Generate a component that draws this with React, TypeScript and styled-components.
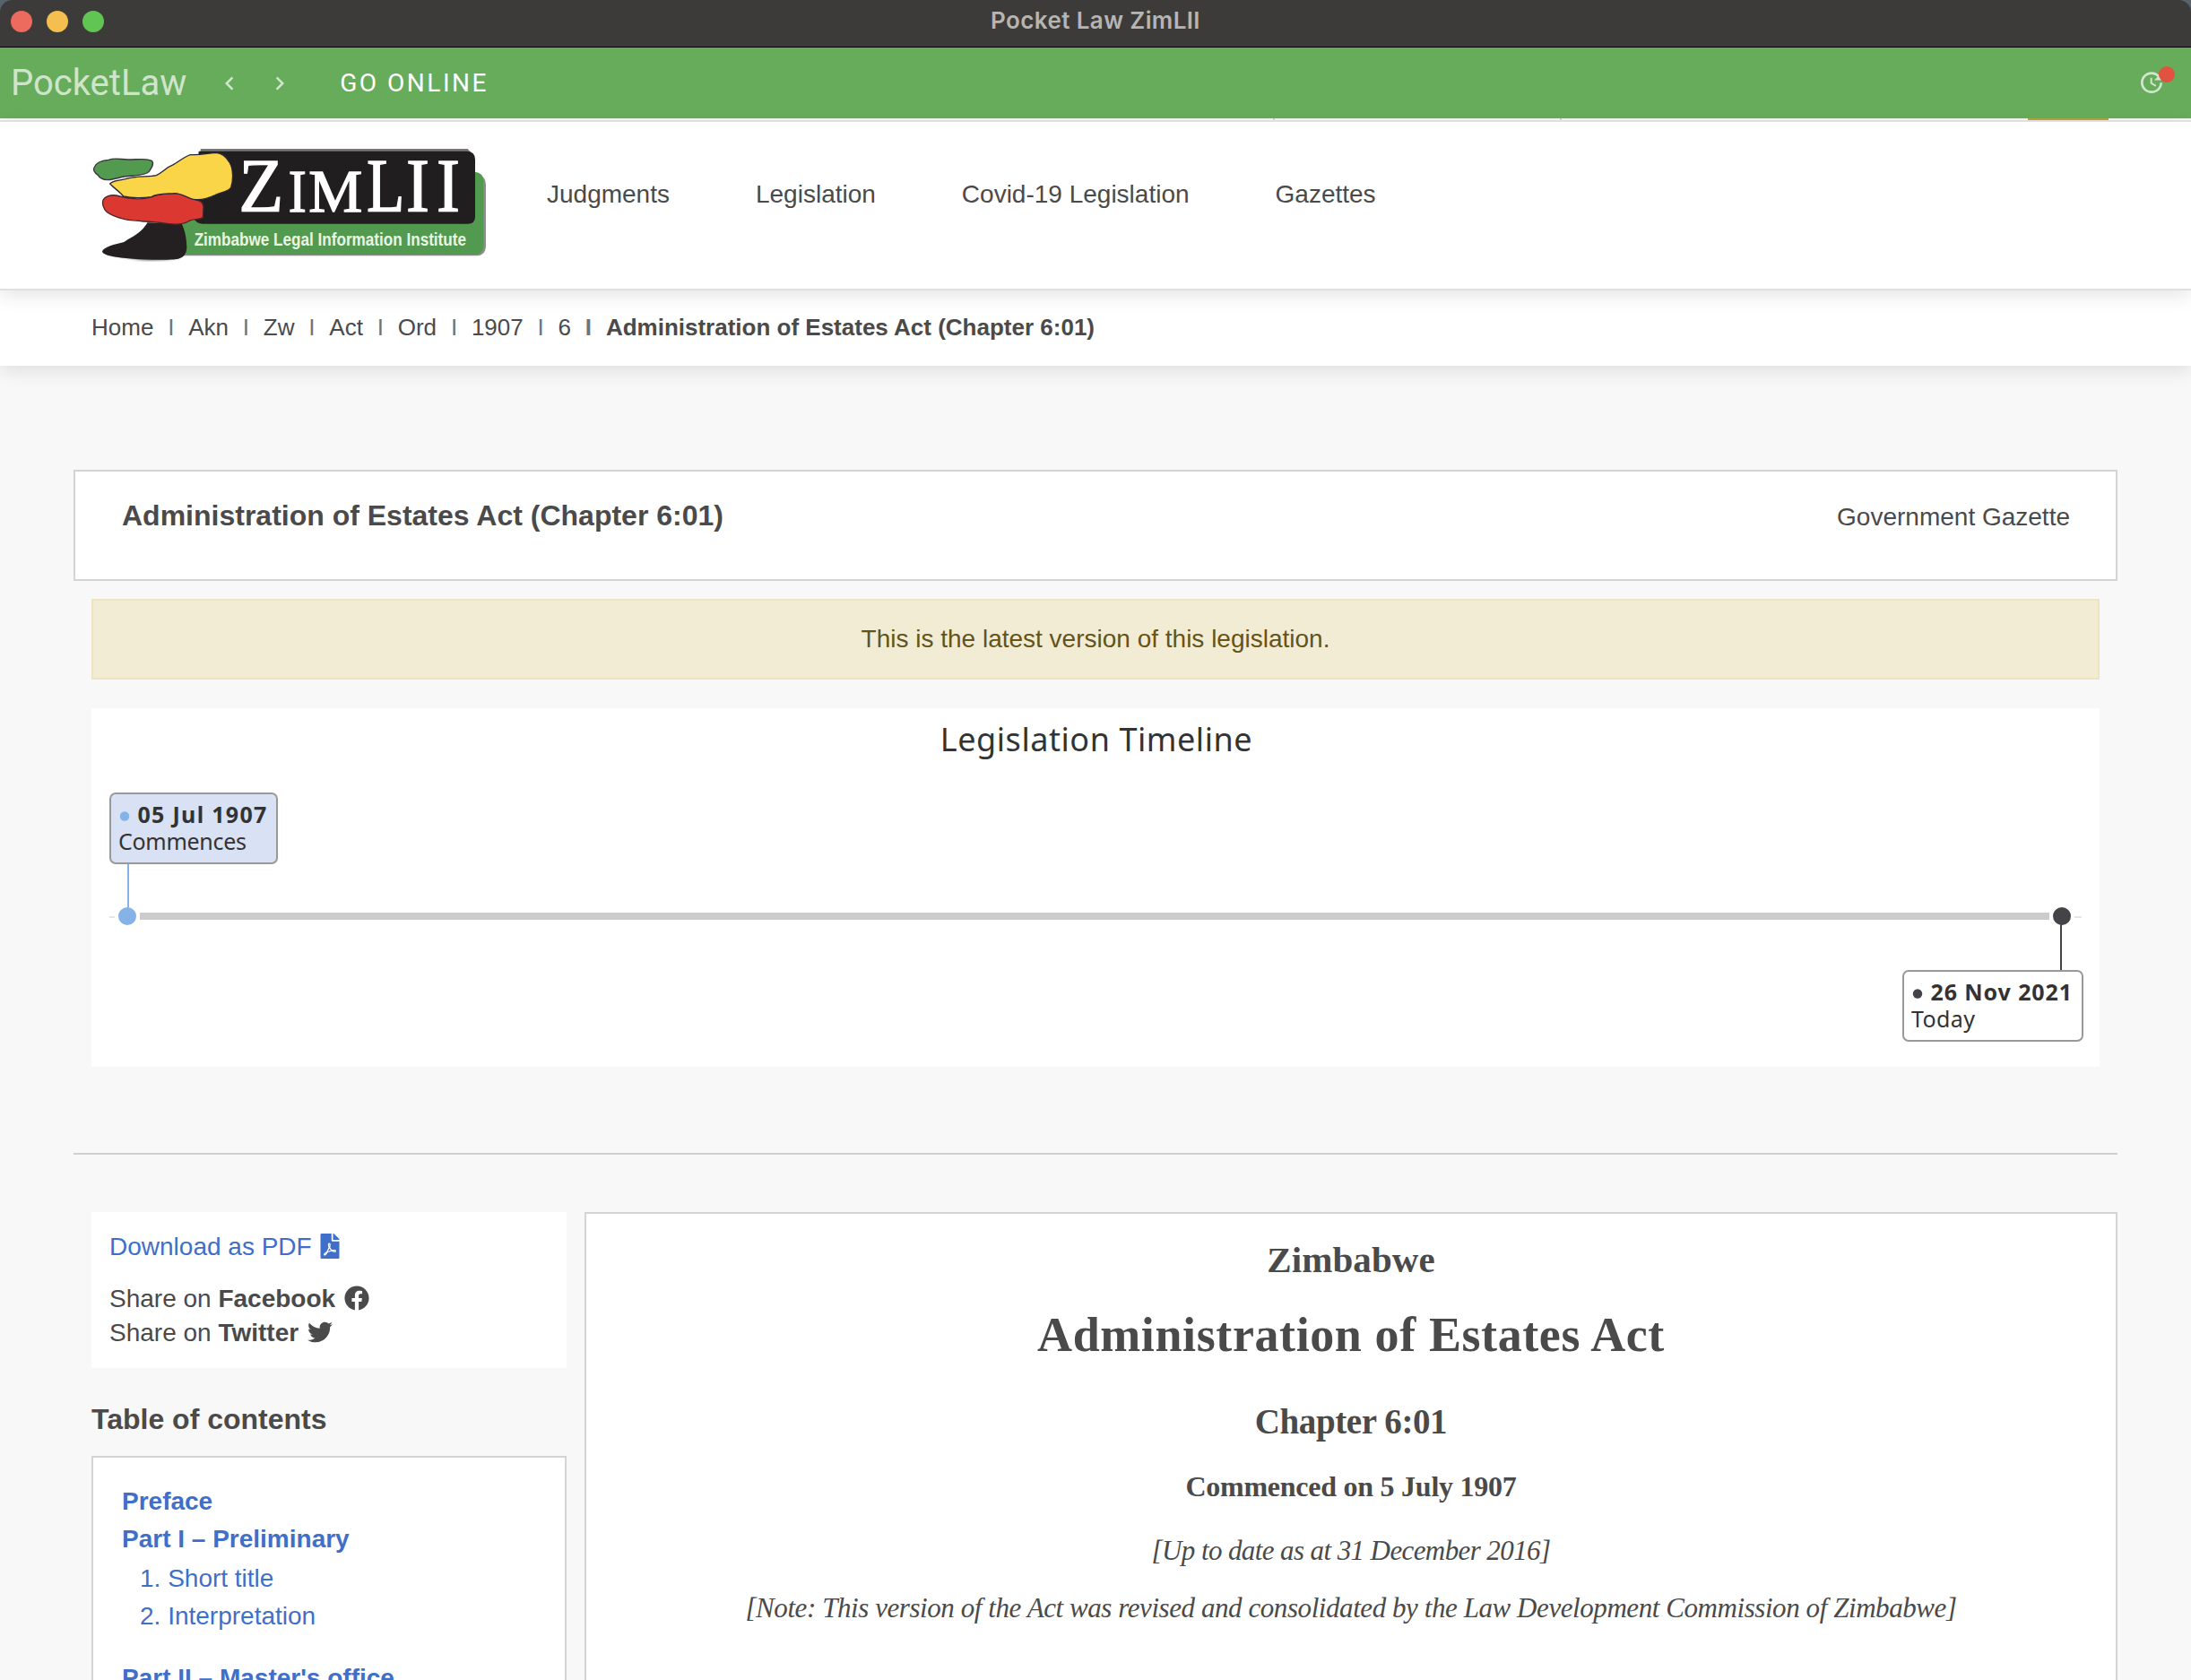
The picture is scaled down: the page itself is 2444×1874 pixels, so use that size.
import React from "react";
import styled, { createGlobalStyle } from "styled-components";
import { FaFacebook, FaFilePdf, FaTwitter } from "react-icons/fa";

const sans = `"Liberation Sans", Arial, sans-serif`;
const serif = `"Liberation Serif", "Times New Roman", serif`;
const roboto = `Roboto, sans-serif`;

const ink = "#4a4a4a";
const link = "#3f6fc9";
const line = "#d4d4d4";

const GlobalStyle = createGlobalStyle`
  *, *::before, *::after { box-sizing: border-box; }
  body { margin: 0; background: #f8f8f8; }
`;

const Window = styled.div`
  display: flex;
  flex-direction: column;
  width: 2444px;
  height: 1874px;
  overflow: hidden;
  background: #f8f8f8;
  color: ${ink};
  font-family: ${sans};
  font-size: 28px;
`;

/* ---------- window chrome ---------- */

const TitleBarBackdrop = styled.div`
  flex: none;
  background: #56636b;
`;

const TitleBar = styled.div`
  display: grid;
  grid-template-columns: 1fr auto 1fr;
  align-items: center;
  height: 53px;
  padding: 0 12px 5px;
  border-bottom: 1px solid #000;
  border-radius: 14px 14px 0 0;
  background: #3c3b39;
`;

const Lights = styled.div`
  display: flex;
  gap: 16px;
`;

const Light = styled.span<{ $color: string }>`
  width: 24px;
  height: 24px;
  border-radius: 50%;
  background: ${(p) => p.$color};
`;

const WindowTitle = styled.div`
  padding-bottom: 2px;
  font: 600 26px/32px Inter, sans-serif;
  letter-spacing: 0.4px;
  color: #b6b5b4;
`;

const AppBar = styled.div`
  display: flex;
  flex: none;
  align-items: center;
  height: 79px;
  padding: 0 28px 0 12px;
  background: #67ac5b;
  color: rgba(255, 255, 255, 0.7);
  font-family: ${roboto};
`;

const Brand = styled.div`
  margin-right: 33px;
  font-size: 40px;
  line-height: 48px;
`;

const Chevrons = styled.div`
  display: flex;
  gap: 26px;
`;

const GoOnline = styled.div`
  margin-left: 52px;
  color: #fff;
  font-size: 28px;
  line-height: 34px;
  letter-spacing: 2.5px;
`;

const Updates = styled.div`
  position: relative;
  display: flex;
  margin: 0 0 1px auto;
`;

const Dot = styled.span`
  position: absolute;
  top: -2px;
  right: -10px;
  width: 18px;
  height: 18px;
  border-radius: 50%;
  background: #e15241;
`;

const MdiIcon = styled.svg<{ $size: number }>`
  display: block;
  width: ${(p) => p.$size}px;
  height: ${(p) => p.$size}px;
  fill: currentColor;
`;

/* ---------- site header ---------- */

const TopStrip = styled.div`
  display: flex;
  flex: none;
  height: 2px;
  background: #f7f7f7;
`;

const StripMark = styled.span<{ $gap: number; $width: number; $color: string }>`
  width: ${(p) => p.$width}px;
  margin-left: ${(p) => p.$gap}px;
  background: ${(p) => p.$color};
`;

const Header = styled.header`
  z-index: 2;
  display: flex;
  flex: none;
  align-items: flex-start;
  height: 190px;
  padding: 30px 102px 0;
  border: solid #e0e0e0;
  border-width: 2px 0;
  background: #fff;
  box-shadow: 0 6px 20px rgba(0, 0, 0, 0.1);
`;

const Logo = styled.svg`
  display: block;
  width: 444px;
  height: 128px;
  overflow: visible;
`;

const Nav = styled.nav`
  display: flex;
  gap: 96px;
  margin: 35px 0 0 64px;
  line-height: 32px;
`;

const Crumbs = styled.div`
  z-index: 1;
  display: flex;
  flex: none;
  gap: 15.8px;
  height: 84px;
  padding: 26px 102px 0;
  background: #fff;
  box-shadow: 0 6px 20px rgba(0, 0, 0, 0.1);
  font-size: 26px;
  line-height: 30px;
`;

const Crumb = styled.span<{ $current?: boolean }>`
  font-weight: ${(p) => (p.$current ? 700 : 400)};
`;

const Separator = styled(Crumb)`
  color: #6c757d;
`;

/* ---------- page ---------- */

const Page = styled.main`
  display: flex;
  flex: none;
  flex-direction: column;
  padding: 116px 82px 0;
`;

const ActHeader = styled.section`
  display: flex;
  align-items: baseline;
  justify-content: space-between;
  height: 124px;
  padding: 30px 51px 0 52px;
  border: 2px solid ${line};
  background: #fff;
`;

const ActTitle = styled.h1`
  margin: 0;
  font-size: 32px;
  line-height: 38px;
`;

const Notice = styled.div`
  display: flex;
  align-items: center;
  justify-content: center;
  height: 90px;
  margin: 20px 20px 0;
  border: 2px solid #ede5c1;
  background: #f3ecd5;
  color: #63541a;
`;

const TimelinePanel = styled.section`
  height: 400px;
  margin: 32px 20px 0;
  background: #fff;
`;

const TimelineChart = styled.svg`
  display: block;
  width: 2240px;
  height: 400px;
  fill: #333;
  font-family: "Noto Sans", "Open Sans", sans-serif;
`;

const ChartTitle = styled.text`
  font-size: 36px;
  letter-spacing: 0.55px;
  text-anchor: middle;
`;

const EventDate = styled.text<{ $spacing: number }>`
  font-size: 25px;
  font-weight: 700;
  letter-spacing: ${(p) => p.$spacing}px;
`;

const EventName = styled.text<{ $spacing: number }>`
  font-size: 25px;
  letter-spacing: ${(p) => p.$spacing}px;
`;

const Rule = styled.hr`
  width: 100%;
  height: 2px;
  margin: 96px 0 64px;
  border: 0;
  background: #d0d0d0;
`;

const Columns = styled.div`
  display: grid;
  grid-template-columns: 530px 1710px;
  gap: 20px;
  padding-left: 20px;
`;

const Sidebar = styled.aside`
  display: flex;
  flex-direction: column;
`;

const ShareBox = styled.div`
  height: 174px;
  padding: 20px 20px 0;
  background: #fff;
  line-height: 38px;

  svg {
    vertical-align: -0.125em;
  }
`;

const Download = styled.div`
  margin-bottom: 20px;
  color: ${link};

  svg {
    margin-left: -1px;
  }
`;

const ShareLine = styled.div`
  color: ${ink};

  svg {
    margin-left: 2px;
  }
`;

const TocHeading = styled.h2`
  margin: 38px 0 22px;
  font-size: 32px;
  line-height: 38px;
`;

const Toc = styled.div`
  height: 420px;
  padding: 31px 32px;
  border: 2px solid ${line};
  background: #fff;
  color: ${link};
  line-height: 36px;
`;

const TocPart = styled.div<{ $before?: number }>`
  margin-top: ${(p) => p.$before ?? 0}px;
  font-weight: 700;
`;

const TocSection = styled.div<{ $before: number }>`
  margin-top: ${(p) => p.$before}px;
  padding-left: 20px;
`;

const Document = styled.article`
  display: flex;
  flex-direction: column;
  align-items: center;
  padding-top: 27px;
  border: 2px solid ${line};
  background: #fff;
  font-family: ${serif};
  white-space: nowrap;
`;

const DocHeading = styled.h2<{ $size: number; $lead: number; $before?: number; $spacing: number }>`
  margin: ${(p) => p.$before ?? 0}px 0 0;
  font-size: ${(p) => p.$size}px;
  line-height: ${(p) => p.$lead}px;
  letter-spacing: ${(p) => p.$spacing}px;
`;

const DocNote = styled.p<{ $before: number; $spacing: number }>`
  margin: ${(p) => p.$before}px 0 0;
  font-size: 31px;
  font-style: italic;
  line-height: 40px;
  letter-spacing: ${(p) => p.$spacing}px;
`;

const crumbs = ["Home", "Akn", "Zw", "Act", "Ord", "1907", "6"];

function ZimLiiLogo() {
  return (
    <Logo viewBox="21 33 1332 384" aria-label="ZimLII">
      <defs>
        <filter id="soft" x="-5%" y="-5%" width="110%" height="115%">
          <feGaussianBlur stdDeviation="5" />
        </filter>
      </defs>
      <path d="M70 385 L300 385 L320 396 Q250 412 180 404Z" fill="#777" filter="url(#soft)" />
      <path d="M320 120 H1310 Q1341 122 1341 152 V356 Q1341 391 1306 391 H320Z" fill="#8d8d8d" />
      <path d="M320 110 H1304 Q1333 112 1333 142 V354 Q1333 387 1303 387 H320Z" fill="#519a4f" />
      <path d="M386 33 H1280 L1296 50 H386Z" fill="#777" />
      <path d="M380 41 H1278 Q1305 43 1305 68 V260 Q1305 284 1280 284 H392 Q376 284 366 270Z" fill="#211e1f" />
      <path d="M208 280 C190 315 150 330 130 345 C100 352 60 362 57 377 C62 393 120 397 160 401 C220 406 290 405 312 401 Q338 395 340 366 C340 330 332 300 322 282Z" fill="#242021" />
      <path d="M30 96 C36 78 55 72 78 70 C100 62 118 68 140 69 C170 70 205 62 224 74 C232 86 220 98 213 110 C200 124 165 121 130 126 C110 130 95 136 75 137 C55 136 48 130 43 121 C30 112 26 104 30 96Z" fill="#519a4f" stroke="#3c3440" strokeWidth="4" />
      <path d="M60 205 C66 192 85 186 104 189 C125 196 145 198 165 200 C190 202 208 199 222 194 C245 182 285 184 306 181 C330 184 350 198 372 204 C388 207 396 214 396 228 L394 263 C380 272 360 266 345 276 C325 288 300 286 280 284 C245 280 220 275 195 276 C165 271 150 274 130 268 C105 262 85 255 72 244 C60 232 56 215 60 205Z" fill="#db3831" stroke="#4b2629" strokeWidth="4" />
      <path d="M83 150 C92 138 115 139 135 134 C170 122 210 128 238 122 C262 110 270 96 295 86 C315 74 335 58 352 53 C380 54 415 48 438 46 C462 48 474 62 484 80 C496 100 496 140 488 162 C478 178 452 178 435 188 C410 200 385 206 362 202 C340 198 325 182 300 182 C265 184 240 182 222 194 C190 198 150 197 128 192 C116 176 100 168 83 150Z" fill="#fad548" stroke="#28243a" strokeWidth="4" />
      <g fill="#fff" stroke="#fff" strokeWidth="4" fontFamily="Liberation Serif, serif">
        <text x="514" y="243" fontSize="255" textLength="150" lengthAdjust="spacingAndGlyphs">Z</text>
        <text x="680" y="243" fontSize="204" textLength="60" lengthAdjust="spacingAndGlyphs">I</text>
        <text x="748" y="243" fontSize="204" textLength="180" lengthAdjust="spacingAndGlyphs">M</text>
        <text x="942" y="243" fontSize="255" textLength="127" lengthAdjust="spacingAndGlyphs">L</text>
        <text x="1074" y="243" fontSize="255" textLength="78" lengthAdjust="spacingAndGlyphs">I</text>
        <text x="1176" y="243" fontSize="255" textLength="78" lengthAdjust="spacingAndGlyphs">I</text>
      </g>
      <text x="365" y="356" fontSize="61" fontWeight="700" fill="#e9f5e3" fontFamily="Liberation Sans, sans-serif" textLength="910" lengthAdjust="spacingAndGlyphs">
        Zimbabwe Legal Information Institute
      </text>
    </Logo>
  );
}

function Timeline() {
  return (
    <TimelineChart viewBox="0 0 2240 400">
      <ChartTitle x="1121" y="48">Legislation Timeline</ChartTitle>
      <rect x="20" y="232" width="6" height="2" fill="#e6e6e6" />
      <rect x="2212" y="232" width="8" height="2" fill="#e6e6e6" />
      <rect x="54" y="228" width="2130" height="8" fill="#ccc" />

      <rect x="40" y="174" width="2" height="50" fill="#85b2e7" />
      <circle cx="40" cy="232" r="10" fill="#85b2e7" />
      <rect x="21" y="95" width="186" height="78" rx="6" fill="#d9e1f4" stroke="#999" strokeWidth="2" />
      <circle cx="37" cy="120.5" r="5.2" fill="#85b2e7" />
      <EventDate x="51.5" y="128" $spacing={1.3}>05 Jul 1907</EventDate>
      <EventName x="30" y="158" $spacing={-0.3}>Commences</EventName>

      <rect x="2196" y="240" width="2" height="54" fill="#434348" />
      <circle cx="2198" cy="232" r="10" fill="#434348" />
      <rect x="2021" y="293" width="200" height="78" rx="6" fill="#fff" stroke="#999" strokeWidth="2" />
      <circle cx="2037" cy="318.5" r="5.2" fill="#434348" />
      <EventDate x="2051.5" y="326" $spacing={0.9}>26 Nov 2021</EventDate>
      <EventName x="2030" y="356" $spacing={0.4}>Today</EventName>
    </TimelineChart>
  );
}

export default function App() {
  return (
    <Window>
      <GlobalStyle />
      <TitleBarBackdrop>
        <TitleBar>
          <Lights>
            <Light $color="#ec6a5e" />
            <Light $color="#f5bf4f" />
            <Light $color="#61c554" />
          </Lights>
          <WindowTitle>Pocket Law ZimLII</WindowTitle>
        </TitleBar>
      </TitleBarBackdrop>

      <AppBar>
        <Brand>PocketLaw</Brand>
        <Chevrons>
          <MdiIcon $size={30} viewBox="0 0 24 24">
            <path d="M15.41,16.58L10.83,12L15.41,7.41L14,6L8,12L14,18L15.41,16.58Z" />
          </MdiIcon>
          <MdiIcon $size={30} viewBox="0 0 24 24">
            <path d="M8.59,16.58L13.17,12L8.59,7.41L10,6L16,12L10,18L8.59,16.58Z" />
          </MdiIcon>
        </Chevrons>
        <GoOnline>GO ONLINE</GoOnline>
        <Updates>
          <MdiIcon $size={32} viewBox="0 0 24 24">
            <path d="M21,10.12H14.22L16.96,7.3C14.23,4.6 9.81,4.5 7.08,7.2C4.35,9.91 4.35,14.28 7.08,17C9.81,19.7 14.23,19.7 16.96,17C18.32,15.65 19,14.08 19,12.1H21C21,14.08 20.12,16.65 18.36,18.39C14.85,21.87 9.15,21.87 5.64,18.39C2.14,14.92 2.11,9.28 5.62,5.81C9.13,2.34 14.76,2.34 18.27,5.81L21,3V10.12M12.5,8V12.25L16,14.33L15.28,15.54L11,13V8H12.5Z" />
          </MdiIcon>
          <Dot />
        </Updates>
      </AppBar>

      <TopStrip>
        <StripMark $gap={1420} $width={2} $color="#d5d5d5" />
        <StripMark $gap={318} $width={2} $color="#d5d5d5" />
        <StripMark $gap={520} $width={90} $color="#b9a53a" />
      </TopStrip>
      <Header>
        <ZimLiiLogo />
        <Nav>
          <span>Judgments</span>
          <span>Legislation</span>
          <span>Covid-19 Legislation</span>
          <span>Gazettes</span>
        </Nav>
      </Header>

      <Crumbs>
        {crumbs.map((label, i) => (
          <React.Fragment key={label}>
            <Crumb>{label}</Crumb>
            <Separator $current={i === crumbs.length - 1}>I</Separator>
          </React.Fragment>
        ))}
        <Crumb $current>Administration of Estates Act (Chapter 6:01)</Crumb>
      </Crumbs>

      <Page>
        <ActHeader>
          <ActTitle>Administration of Estates Act (Chapter 6:01)</ActTitle>
          <span>Government Gazette</span>
        </ActHeader>
        <Notice>This is the latest version of this legislation.</Notice>
        <TimelinePanel>
          <Timeline />
        </TimelinePanel>
        <Rule />
        <Columns>
          <Sidebar>
            <ShareBox>
              <Download>
                Download as PDF <FaFilePdf />
              </Download>
              <ShareLine>
                Share on <b>Facebook</b> <FaFacebook />
              </ShareLine>
              <ShareLine>
                Share on <b>Twitter</b> <FaTwitter />
              </ShareLine>
            </ShareBox>
            <TocHeading>Table of contents</TocHeading>
            <Toc>
              <TocPart>Preface</TocPart>
              <TocPart $before={6}>Part I – Preliminary</TocPart>
              <TocSection $before={8}>1. Short title</TocSection>
              <TocSection $before={6}>2. Interpretation</TocSection>
              <TocPart $before={33}>Part II – Master's office</TocPart>
            </Toc>
          </Sidebar>
          <Document>
            <DocHeading $size={41} $lead={48} $spacing={0.1}>Zimbabwe</DocHeading>
            <DocHeading $size={54} $lead={66} $before={27} $spacing={0.6}>Administration of Estates Act</DocHeading>
            <DocHeading $size={39} $lead={48} $before={40} $spacing={-0.4}>Chapter 6:01</DocHeading>
            <DocHeading $size={32} $lead={40} $before={28} $spacing={-0.25}>Commenced on 5 July 1907</DocHeading>
            <DocNote $before={32} $spacing={-0.6}>[Up to date as at 31 December 2016]</DocNote>
            <DocNote $before={24} $spacing={-0.43}>
              [Note: This version of the Act was revised and consolidated by the Law Development Commission of Zimbabwe]
            </DocNote>
          </Document>
        </Columns>
      </Page>
    </Window>
  );
}
